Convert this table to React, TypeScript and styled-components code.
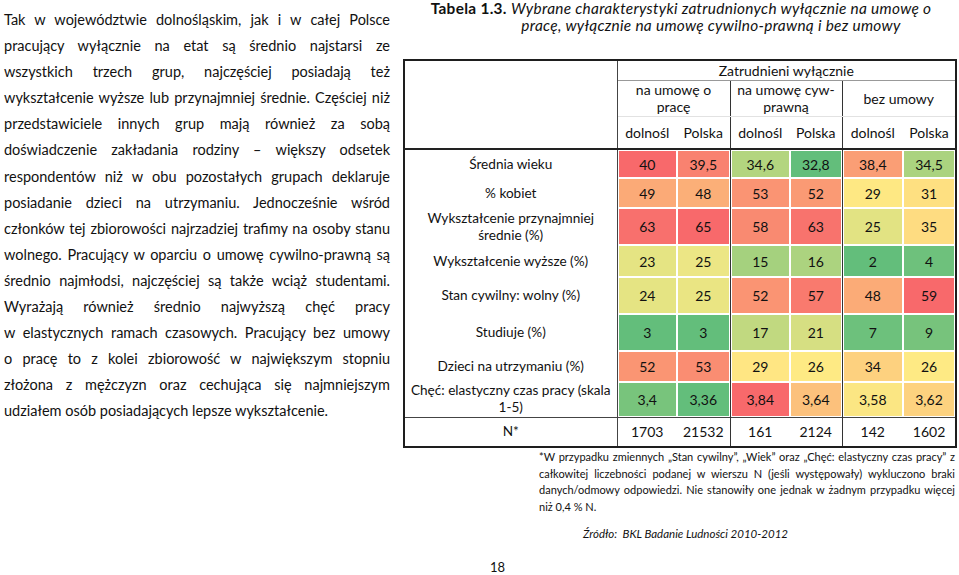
import React from "react";
import styled, { createGlobalStyle } from "styled-components";

const Global = createGlobalStyle`
  html, body { margin: 0; padding: 0; background: #fff; }
  body { font-family: Lato, "Noto Sans", sans-serif; color: #111; }
`;

const Page = styled.div`
  width: 959px;
  height: 575px;
  display: flex;
  flex-direction: column;
  overflow: hidden;
`;

const Columns = styled.div`
  display: flex;
  align-items: flex-start;
`;

const LeftCol = styled.div`
  width: 386px;
  padding: 7px 0 0 4px;
  font-size: 14.5px;
  line-height: 26.1px;
`;

const Line = styled.span<{ $last?: boolean }>`
  display: block;
  text-align: ${(p) => (p.$last ? "left" : "justify")};
  text-align-last: ${(p) => (p.$last ? "left" : "justify")};
`;

const RightCol = styled.div`
  width: 556px;
  margin-left: 13px;
  display: flex;
  flex-direction: column;
`;

const Title = styled.div`
  font-size: 15.4px;
  letter-spacing: 0.3px;
  line-height: 17px;
  b { font-weight: 700; }
  i { font-style: italic; }
`;

const TitleLine = styled.span<{ $shift?: number }>`
  display: block;
  text-align: center;
  white-space: nowrap;
  padding-left: ${(p) => p.$shift ?? 0}px;
`;

const Table = styled.table`
  margin-top: 25px;
  border-collapse: collapse;
  table-layout: fixed;
  width: 554px;
  border: 2px solid #1e1e1e;
  font-size: 14px;
  line-height: 17px;
`;

const Row = styled.tr<{ $h: number; $top?: boolean }>`
  height: ${(p) => p.$h}px;
  td { ${(p) => (p.$top ? "border-top: 1px solid #444;" : "")} }
`;

const Cell = styled.td<{ $groupStart?: boolean }>`
  padding: 0;
  text-align: center;
  vertical-align: middle;
  ${(p) => (p.$groupStart ? "border-left: 1px solid #333;" : "")}
`;

const HeadCell = styled.th<{ $groupStart?: boolean; $bottom?: string; $right?: boolean }>`
  padding: 0;
  text-align: center;
  vertical-align: middle;
  font-weight: 400;
  ${(p) => (p.$groupStart ? "border-left: 1px solid #333;" : "")}
  ${(p) => (p.$right ? "border-right: 1px solid #444;" : "")}
  ${(p) => (p.$bottom ? `border-bottom: ${p.$bottom};` : "")}
`;

const LabelCell = styled.td`
  padding: 0;
  text-align: center;
  vertical-align: middle;
  white-space: nowrap;
  font-size: 13.6px;
  border-right: 1px solid #444;
`;

const ValueCell = styled.td<{ $bg: string; $groupStart?: boolean }>`
  padding: 0;
  text-align: center;
  vertical-align: middle;
  background: ${(p) => p.$bg};
  box-shadow: inset 0 0 0 1px #fff;
  ${(p) => (p.$groupStart ? "border-left: 1px solid #333;" : "")}
`;

const Footnote = styled.div`
  align-self: flex-end;
  width: 416px;
  margin-right: 4px;
  margin-top: 1px;
  font-size: 11px;
  line-height: 16.7px;
`;

const Source = styled.div`
  margin-top: 10px;
  padding-left: 180px;
  font-size: 11.5px;
  font-style: italic;
  line-height: 16px;
`;

const PageNumber = styled.div`
  margin-top: auto;
  padding-left: 490px;
  font-size: 13px;
  line-height: 16px;
  height: 16px;
`;

const paragraph = [
  "Tak w województwie dolnośląskim, jak i w całej Polsce",
  "pracujący wyłącznie na etat są średnio najstarsi ze",
  "wszystkich trzech grup, najczęściej posiadają też",
  "wykształcenie wyższe lub przynajmniej średnie. Częściej niż",
  "przedstawiciele innych grup mają również za sobą",
  "doświadczenie zakładania rodziny – większy odsetek",
  "respondentów niż w obu pozostałych grupach deklaruje",
  "posiadanie dzieci na utrzymaniu. Jednocześnie wśród",
  "członków tej zbiorowości najrzadziej trafimy na osoby stanu",
  "wolnego. Pracujący w oparciu o umowę cywilno-prawną są",
  "średnio najmłodsi, najczęściej są także wciąż studentami.",
  "Wyrażają również średnio najwyższą chęć pracy",
  "w elastycznych ramach czasowych. Pracujący bez umowy",
  "o pracę to z kolei zbiorowość w największym stopniu",
  "złożona z mężczyzn oraz cechująca się najmniejszym",
  "udziałem osób posiadających lepsze wykształcenie.",
];

const footnote = [
  "*W przypadku zmiennych „Stan cywilny”, „Wiek” oraz „Chęć: elastyczny czas pracy” z",
  "całkowitej liczebności podanej w wierszu N (jeśli występowały) wykluczono braki",
  "danych/odmowy odpowiedzi. Nie stanowiły one jednak w żadnym przypadku więcej",
  "niż 0,4 % N.",
];

type DataRow = { label: React.ReactNode; h: number; cells: [string, string][] };

const rows: DataRow[] = [
  {
    label: "Średnia wieku",
    h: 29,
    cells: [["40", "#f8696b"], ["39,5", "#f98270"], ["34,6", "#b3d57f"], ["32,8", "#63be7b"], ["38,4", "#fa9e75"], ["34,5", "#abd37f"]],
  },
  {
    label: "% kobiet",
    h: 30,
    cells: [["49", "#fbaa77"], ["48", "#fbaf78"], ["53", "#fa9473"], ["52", "#fa9a74"], ["29", "#fee883"], ["31", "#fee081"]],
  },
  {
    label: (
      <>
        Wykształcenie przynajmniej
        <br />
        średnie (%)
      </>
    ),
    h: 37,
    cells: [["63", "#f8706d"], ["65", "#f8696b"], ["58", "#f98a71"], ["63", "#f8736d"], ["25", "#e2e383"], ["35", "#fedc81"]],
  },
  {
    label: "Wykształcenie wyższe (%)",
    h: 32,
    cells: [["23", "#e5e483"], ["25", "#ece685"], ["15", "#a5d17e"], ["16", "#acd37f"], ["2", "#63be7b"], ["4", "#6ec17c"]],
  },
  {
    label: "Stan cywilny: wolny (%)",
    h: 37,
    cells: [["24", "#e5e483"], ["25", "#eae583"], ["52", "#fa9473"], ["57", "#f97a6e"], ["48", "#fbab77"], ["59", "#f8696b"]],
  },
  {
    label: "Studiuje (%)",
    h: 37,
    cells: [["3", "#63be7b"], ["3", "#63be7b"], ["17", "#c1d980"], ["21", "#d6df82"], ["7", "#6dc17c"], ["9", "#77c37c"]],
  },
  {
    label: "Dzieci na utrzymaniu (%)",
    h: 31,
    cells: [["52", "#fa9573"], ["53", "#fa8d72"], ["29", "#ffe683"], ["26", "#feea84"], ["34", "#fdd17f"], ["26", "#feea84"]],
  },
  {
    label: (
      <>
        Chęć: elastyczny czas pracy (skala
        <br />
        1-5)
      </>
    ),
    h: 35,
    cells: [["3,4", "#78c47c"], ["3,36", "#63be7b"], ["3,84", "#f8696b"], ["3,64", "#fcc17c"], ["3,58", "#fbe683"], ["3,62", "#fdd27f"]],
  },
];

const nValues = ["1703", "21532", "161", "2124", "142", "1602"];
const colWidths = [213, 60, 53, 60, 52, 61, 53];

export default function App() {
  return (
    <Page>
      <Global />
      <Columns>
        <LeftCol>
          {paragraph.map((t, i) => (
            <Line key={i} $last={i === paragraph.length - 1}>
              {t}
            </Line>
          ))}
        </LeftCol>
        <RightCol>
          <Title>
            <TitleLine>
              <b>Tabela 1.3.</b> <i>Wybrane charakterystyki zatrudnionych wyłącznie na umowę o</i>
            </TitleLine>
            <TitleLine $shift={60}>
              <i>pracę, wyłącznie na umowę cywilno-prawną i bez umowy</i>
            </TitleLine>
          </Title>
          <Table>
            <colgroup>
              {colWidths.map((w, i) => (
                <col key={i} style={{ width: w }} />
              ))}
            </colgroup>
            <thead>
              <Row $h={20}>
                <HeadCell rowSpan={3} $bottom="2px solid #222" $right />
                <HeadCell colSpan={6} $bottom="1px solid #999">
                  Zatrudnieni wyłącznie
                </HeadCell>
              </Row>
              <Row $h={36}>
                <HeadCell colSpan={2} $bottom="1px solid #e2e2e2">
                  na umowę o
                  <br />
                  pracę
                </HeadCell>
                <HeadCell colSpan={2} $groupStart $bottom="1px solid #e2e2e2">
                  na umowę cyw-
                  <br />
                  prawną
                </HeadCell>
                <HeadCell colSpan={2} $groupStart $bottom="1px solid #e2e2e2">
                  bez umowy
                </HeadCell>
              </Row>
              <Row $h={33}>
                {["dolnośl", "Polska", "dolnośl", "Polska", "dolnośl", "Polska"].map((t, i) => (
                  <HeadCell key={i} $groupStart={i === 2 || i === 4} $bottom="2px solid #222">
                    {t}
                  </HeadCell>
                ))}
              </Row>
            </thead>
            <tbody>
              {rows.map((r, ri) => (
                <Row key={ri} $h={r.h}>
                  <LabelCell>{r.label}</LabelCell>
                  {r.cells.map(([v, bg], ci) => (
                    <ValueCell key={ci} $bg={bg} $groupStart={ci === 2 || ci === 4}>
                      {v}
                    </ValueCell>
                  ))}
                </Row>
              ))}
              <Row $h={30} $top>
                <LabelCell>N*</LabelCell>
                {nValues.map((v, ci) => (
                  <Cell key={ci} $groupStart={ci === 2 || ci === 4}>
                    {v}
                  </Cell>
                ))}
              </Row>
            </tbody>
          </Table>
          <Footnote>
            {footnote.map((t, i) => (
              <Line key={i} $last={i === footnote.length - 1}>
                {t}
              </Line>
            ))}
          </Footnote>
          <Source>Źródło:&nbsp; BKL Badanie Ludności 2010-2012</Source>
        </RightCol>
      </Columns>
      <PageNumber>18</PageNumber>
    </Page>
  );
}
